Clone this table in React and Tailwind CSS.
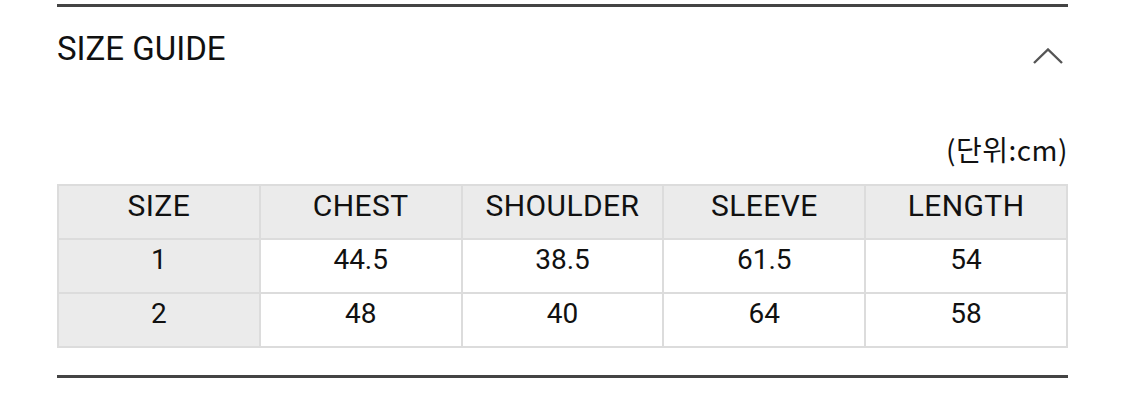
import React from "react";

const rows = [
  ["1", "44.5", "38.5", "61.5", "54"],
  ["2", "48", "40", "64", "58"],
];
const heads = ["SIZE", "CHEST", "SHOULDER", "SLEEVE", "LENGTH"];

export default function App() {
  return (
    <div className="w-[1125px] h-[412px] bg-white pt-[4px] font-['Roboto',sans-serif] text-[#111]">
      <div className="mx-[57px] border-t-[3px] border-[#444]">
        {/* Header */}
        <div className="flex items-center justify-between h-[86px] pb-[4px]">
          <span className="text-[33px] leading-none">SIZE GUIDE</span>
          <svg width="30" height="16" viewBox="0 0 30 16" className="mr-[5px] mt-[16px]">
            <polyline points="1,15 15,1.5 29,15" fill="none" stroke="#555" strokeWidth="2.4" />
          </svg>
        </div>

        <div className="h-[91px] flex items-end justify-end pb-[21px]">
          <span className="text-[28px] leading-none font-['Noto_Sans_CJK_KR',sans-serif] tracking-[0.5px]">(단위:cm)</span>
        </div>

        {/* Table */}
        <table className="w-full border-collapse table-fixed text-center">
          <thead>
            <tr className="bg-[#ebebeb]">
              {heads.map((h) => (
                <th
                  key={h}
                  className="h-[54px] text-[30px] leading-[30px] tracking-[0.4px] font-normal border-2 border-[#dcdcdc] p-0 pb-[12px]"
                >
                  {h}
                </th>
              ))}
            </tr>
          </thead>
          <tbody>
            {rows.map((r) => (
              <tr key={r[0]}>
                {r.map((c, i) => (
                  <td
                    key={i}
                    className={`h-[54px] text-[28px] leading-[30px] border-2 border-[#dcdcdc] p-0 pb-[12px] ${i === 0 ? "bg-[#ebebeb]" : "bg-white"}`}
                  >
                    {c}
                  </td>
                ))}
              </tr>
            ))}
          </tbody>
        </table>

        <div className="mt-[27px] border-t-[3px] border-[#444]" />
      </div>
    </div>
  );
}
